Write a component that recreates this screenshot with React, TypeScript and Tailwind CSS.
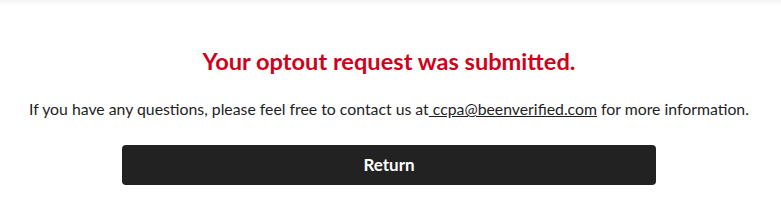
export default function App() {
  return (
    <div className="w-[781px] h-[222px] bg-white font-['Lato','Liberation_Sans',sans-serif] relative">
      <div className="h-[6px] bg-gradient-to-b from-[#f4f4f4] to-white" />
      <div className="flex flex-col items-center pt-[40px] pr-[3px]">
        <h1 className="text-[23.6px] leading-[30px] font-bold text-[#d0021b]">
          Your optout request was submitted.
        </h1>
        <p className="mt-[22px] text-[15.8px] leading-[22px] text-[#1e1e1e]">
          If you have any questions, please feel free to contact us at
          <a href="#" className="underline"> ccpa@beenverified.com</a> for more information.
        </p>
        <button className="mt-[25px] w-[534px] h-[40px] rounded-[4px] bg-[#222] text-white font-bold text-[17px]">
          Return
        </button>
      </div>
    </div>
  );
}
